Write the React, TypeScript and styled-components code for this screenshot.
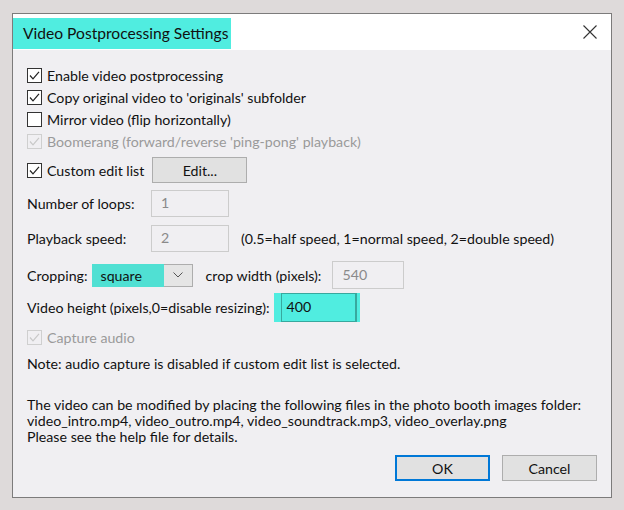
import React from "react";
import styled, { createGlobalStyle } from "styled-components";

const Global = createGlobalStyle`
  html, body { margin: 0; padding: 0; background: #dedada; }
  body { font-family: "Segoe UI", Lato, "Noto Sans", sans-serif; }
`;

const Page = styled.div`
  width: 624px;
  height: 510px;
  padding: 13px 0 0 12px;
  box-sizing: border-box;
`;

const Dialog = styled.div`
  width: 600px;
  height: 485px;
  box-sizing: border-box;
  border: 1px solid #7c7b7b;
  background: #f0eff2;
  display: flex;
  flex-direction: column;
  color: #111;
  font-size: 14.2px;
`;

const TitleBar = styled.div`
  height: 36px;
  background: #fff;
  display: flex;
  align-items: center;
  justify-content: space-between;
`;

const TitleText = styled.div`
  background: #50ede0;
  height: 31px;
  margin-top: 2px;
  padding: 0 3px 0 10px;
  display: flex;
  align-items: center;
  font-size: 15.6px;
  color: #111;
`;

const CloseBox = styled.div`
  width: 40px;
  height: 36px;
  display: flex;
  align-items: center;
  justify-content: center;
  margin-right: 1px;
`;

const Body = styled.div`
  flex: 1;
  display: flex;
  flex-direction: column;
  padding: 14px 13px 0 14px;
`;

const Row = styled.div<{ $h: number; $mt?: number }>`
  height: ${(p) => p.$h}px;
  margin-top: ${(p) => p.$mt ?? 0}px;
  display: flex;
  align-items: center;
  white-space: nowrap;
`;

const CheckLabel = styled.label<{ $disabled?: boolean }>`
  display: flex;
  align-items: center;
  gap: 5px;
  color: ${(p) => (p.$disabled ? "#9a9a9a" : "#111")};
`;

const Box = styled.span<{ $disabled?: boolean }>`
  width: 15px;
  height: 15px;
  box-sizing: border-box;
  border: 1px solid ${(p) => (p.$disabled ? "#cfcfcf" : "#333")};
  background: ${(p) => (p.$disabled ? "#f0eff2" : "#fff")};
  display: flex;
  align-items: center;
  justify-content: center;
`;

const Button = styled.div<{ $w: number; $default?: boolean; $ml?: number }>`
  width: ${(p) => p.$w}px;
  height: 26px;
  margin-left: ${(p) => p.$ml ?? 0}px;
  box-sizing: border-box;
  border: ${(p) => (p.$default ? "2px solid #0078d7" : "1px solid #adadad")};
  background: #e1e1e1;
  display: flex;
  align-items: center;
  justify-content: center;
  color: #111;
`;

const Label = styled.span<{ $w?: number; $ml?: number }>`
  width: ${(p) => (p.$w ? `${p.$w}px` : "auto")};
  margin-left: ${(p) => p.$ml ?? 0}px;
  flex: none;
`;

const TextBox = styled.div<{ $w: number; $h?: number; $ml?: number }>`
  width: ${(p) => p.$w}px;
  height: ${(p) => p.$h ?? 27}px;
  margin-left: ${(p) => p.$ml ?? 0}px;
  box-sizing: border-box;
  border: 1px solid #cccccc;
  background: #f0eff2;
  color: #8a8a8a;
  padding: 0 0 2px 9px;
  display: flex;
  align-items: center;
`;

const Hint = styled.span`
  margin-left: 12px;
`;

const Select = styled.div`
  margin-left: 5px;
  width: 100px;
  height: 23px;
  box-sizing: border-box;
  border: 1px solid #adadad;
  background: #e5e5e5;
  display: flex;
  align-items: center;
`;

const SelectValue = styled.div`
  width: 72px;
  align-self: stretch;
  margin: -1px 0 -1px -2px;
  background: #50e0d3;
  display: flex;
  align-items: center;
  padding-left: 9px;
  box-sizing: border-box;
`;

const Chevron = styled.div`
  flex: 1;
  display: flex;
  justify-content: center;
`;

const HighlightWrap = styled.div`
  margin-left: 4px;
  background: #50ede0;
  padding: 0 3px 0 7px;
  height: 29px;
  display: flex;
  align-items: stretch;
`;

const HighlightInput = styled.div`
  width: 76px;
  box-sizing: border-box;
  border: 1px solid #38a89e;
  border-right-width: 2px;
  display: flex;
  align-items: center;
  padding: 0 0 3px 5px;
  color: #111;
`;

const Paragraph = styled.div`
  margin-top: 24px;
  line-height: 16px;
  white-space: nowrap;
`;

const Footer = styled.div`
  margin-top: 10px;
  display: flex;
  justify-content: flex-end;
  gap: 12px;
  padding-right: 1px;
`;

const Check = ({ disabled }: { disabled?: boolean }) => (
  <svg width="13" height="13" viewBox="0 0 13 13">
    <path
      d="M2 6.5 L5 9.8 L11 2.8"
      fill="none"
      stroke={disabled ? "#c8c8c8" : "#222"}
      strokeWidth="1.2"
    />
  </svg>
);

const CheckRow = ({
  checked,
  disabled,
  children,
}: {
  checked?: boolean;
  disabled?: boolean;
  children: React.ReactNode;
}) => (
  <CheckLabel $disabled={disabled}>
    <Box $disabled={disabled}>{checked && <Check disabled={disabled} />}</Box>
    {children}
  </CheckLabel>
);

export default function App() {
  return (
    <>
      <Global />
      <Page>
        <Dialog>
          <TitleBar>
            <TitleText>Video Postprocessing Settings</TitleText>
            <CloseBox>
              <svg width="14" height="14" viewBox="0 0 14 14">
                <path d="M0.5 0.5 L13.5 13.5 M13.5 0.5 L0.5 13.5" stroke="#333" strokeWidth="1.1" />
              </svg>
            </CloseBox>
          </TitleBar>
          <Body>
            <Row $h={22}>
              <CheckRow checked>Enable video postprocessing</CheckRow>
            </Row>
            <Row $h={22}>
              <CheckRow checked>Copy original video to 'originals' subfolder</CheckRow>
            </Row>
            <Row $h={22}>
              <CheckRow>Mirror video (flip horizontally)</CheckRow>
            </Row>
            <Row $h={22}>
              <CheckRow checked disabled>
                Boomerang (forward/reverse 'ping-pong' playback)
              </CheckRow>
            </Row>
            <Row $h={26} $mt={5}>
              <CheckRow checked>Custom edit list</CheckRow>
              <Button $w={95} $ml={8}>Edit...</Button>
            </Row>
            <Row $h={27} $mt={7}>
              <Label $w={124}>Number of loops:</Label>
              <TextBox $w={78}>1</TextBox>
            </Row>
            <Row $h={27} $mt={8}>
              <Label $w={124}>Playback speed:</Label>
              <TextBox $w={78}>2</TextBox>
              <Hint>(0.5=half speed, 1=normal speed, 2=double speed)</Hint>
            </Row>
            <Row $h={28} $mt={9}>
              <Label>Cropping:</Label>
              <Select>
                <SelectValue>square</SelectValue>
                <Chevron>
                  <svg width="10" height="6" viewBox="0 0 10 6">
                    <path d="M0.5 0.5 L5 5 L9.5 0.5" fill="none" stroke="#555" strokeWidth="1" />
                  </svg>
                </Chevron>
              </Select>
              <Label $ml={13}>crop width (pixels):</Label>
              <TextBox $w={72} $h={28} $ml={11}>540</TextBox>
            </Row>
            <Row $h={29} $mt={4}>
              <Label>Video height (pixels,0=disable resizing):</Label>
              <HighlightWrap>
                <HighlightInput>400</HighlightInput>
              </HighlightWrap>
            </Row>
            <Row $h={22} $mt={4}>
              <CheckRow checked disabled>
                Capture audio
              </CheckRow>
            </Row>
            <Row $h={20} $mt={5}>
              Note: audio capture is disabled if custom edit list is selected.
            </Row>
            <Paragraph>
              The video can be modified by placing the following files in the photo booth images folder:
              <br />
              video_intro.mp4, video_outro.mp4, video_soundtrack.mp3, video_overlay.png
              <br />
              Please see the help file for details.
            </Paragraph>
            <Footer>
              <Button $w={95} $default>OK</Button>
              <Button $w={95}>Cancel</Button>
            </Footer>
          </Body>
        </Dialog>
      </Page>
    </>
  );
}
